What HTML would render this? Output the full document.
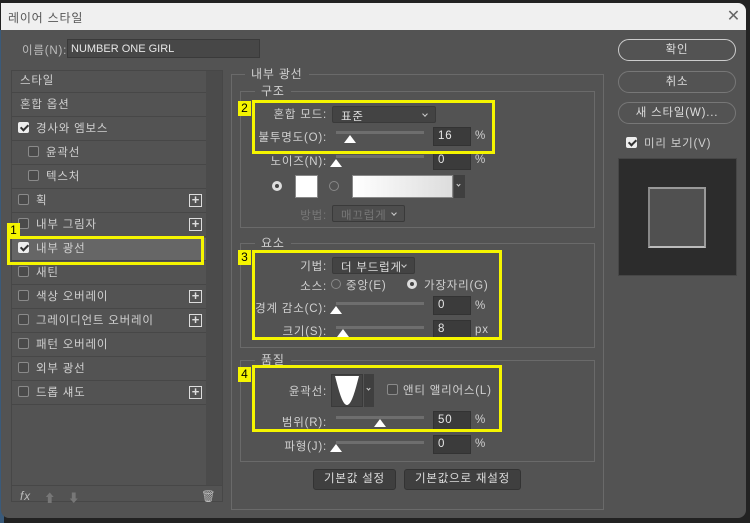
<!DOCTYPE html>
<html><head><meta charset="utf-8"><style>
*{margin:0;padding:0;box-sizing:border-box}
body{width:750px;height:523px;overflow:hidden;background:#222;font-family:"Liberation Sans","Noto Sans CJK KR",sans-serif;font-size:11.5px;color:#d0d0d0;position:relative;letter-spacing:0.8px}
.a{position:absolute}
.dlg{left:1px;top:3px;width:745px;height:515px;background:#535353;border-radius:0 8px 8px 8px;overflow:hidden}
.title{left:0;top:0;width:745px;height:27px;background:#f0f0f0;color:#555;font-size:12px;padding:6px 0 0 7px}
.item{left:12px;width:194px;height:23px;border-bottom:1px solid #474747;line-height:22px}
.cb{display:inline-block;width:11px;height:11px;border:1px solid #8a8a8a;border-radius:2px;vertical-align:-1px;margin-right:7px;background:#4a4a4a}
.cbc{background:#eee;border-color:#eee;position:relative}
.cbc:after{content:"";position:absolute;left:3px;top:0px;width:3px;height:6px;border:solid #333;border-width:0 2px 2px 0;transform:rotate(45deg)}
.plus{width:13px;height:13px;border:1px solid #ddd;color:#ddd;font-size:13px;line-height:10px;text-align:center;font-weight:bold;letter-spacing:0}
.grp{border:1px solid #6a6a6a}
.lg{background:#535353;padding:0 6px;font-size:12px}
.yb{border:3px solid #f5f500}
.yl{background:#f5f500;color:#000;font-size:12px;line-height:14px;width:13px;height:15px;text-align:center;letter-spacing:0}
.dd{background:#434343;border:1px solid #3a3a3a;border-radius:2px;color:#ddd;padding:1px 0 0 8px;height:17px}
.dd:after{content:"";position:absolute;right:8px;top:5px;width:3px;height:3px;border:solid #ccc;border-width:0 1px 1px 0;transform:rotate(45deg)}
.inp{background:#3b3b3b;border:1px solid #333;height:19px;width:38px;padding:2px 0 0 4px;color:#e6e6e6}
.trk{height:3px;background:#6e6e6e;width:88px}
.th{width:0;height:0;border-left:6px solid transparent;border-right:6px solid transparent;border-bottom:8px solid #fff}
.btn{border:1px solid #8a8a8a;border-radius:12px;text-align:center;line-height:20px;color:#ddd;width:118px;height:22px}
.rb{border:1px solid #333;background:#3f3f3f;border-radius:3px;height:21px;line-height:19px;text-align:center;color:#ddd}
.r{text-align:right}
</style></head><body>
<div class="a" style="left:0;top:30px;width:4px;height:493px;background:#3a5a7a"></div>
<div class="a dlg">
<div class="a title">레이어 스타일</div>
<div class="a" style="right:5px;top:3px;color:#666;font-size:16px">✕</div>
</div>
<div class="a" style="left:22px;top:42px;color:#bbb">이름(N):</div>
<div class="a" style="left:67px;top:39px;width:193px;height:19px;background:#474747;border:1px solid #3a3a3a;color:#e6e6e6;padding:3px 0 0 3px;font-size:11px;letter-spacing:0">NUMBER ONE GIRL</div>

<div class="a" style="left:11px;top:70px;width:212px;height:432px;border:1px solid #474747"></div>
<div class="a" style="left:206px;top:71px;width:16px;height:414px;background:#4b4b4b"></div>
<div class="a" style="left:12px;top:485px;width:210px;height:1px;background:#474747"></div>
<div class="a item" style="top:70px;padding-left:8px">스타일</div>
<div class="a item" style="top:94px;padding-left:8px">혼합 옵션</div>
<div class="a item" style="top:118px;padding-left:6px"><span class="cb cbc"></span>경사와 엠보스</div>
<div class="a item" style="top:142px;padding-left:16px"><span class="cb"></span>윤곽선</div>
<div class="a item" style="top:166px;padding-left:16px"><span class="cb"></span>텍스처</div>
<div class="a item" style="top:190px;padding-left:6px"><span class="cb"></span>획</div>
<div class="a item" style="top:214px;padding-left:6px"><span class="cb"></span>내부 그림자</div>
<div class="a item" style="top:238px;padding-left:6px;background:#666"><span class="cb cbc"></span>내부 광선</div>
<div class="a item" style="top:262px;padding-left:6px"><span class="cb"></span>새틴</div>
<div class="a item" style="top:286px;padding-left:6px"><span class="cb"></span>색상 오버레이</div>
<div class="a item" style="top:310px;padding-left:6px"><span class="cb"></span>그레이디언트 오버레이</div>
<div class="a item" style="top:334px;padding-left:6px"><span class="cb"></span>패턴 오버레이</div>
<div class="a item" style="top:358px;padding-left:6px"><span class="cb"></span>외부 광선</div>
<div class="a item" style="top:382px;padding-left:6px"><span class="cb"></span>드롭 섀도</div>
<div class="a plus" style="left:189px;top:194px">+</div>
<div class="a plus" style="left:189px;top:218px">+</div>
<div class="a plus" style="left:189px;top:290px">+</div>
<div class="a plus" style="left:189px;top:314px">+</div>
<div class="a plus" style="left:189px;top:386px">+</div>
<div class="a yb" style="left:7px;top:236px;width:197px;height:29px"></div>
<div class="a yl" style="left:7px;top:223px">1</div>
<div class="a" style="left:20px;top:489px;font-style:italic;color:#bbb;font-size:12px">fx</div>
<div class="a" style="left:44px;top:490px;color:#777">⬆</div>
<div class="a" style="left:68px;top:490px;color:#777">⬇</div>
<div class="a" style="left:201px;top:489px;color:#bbb">🗑</div>

<div class="a grp" style="left:231px;top:74px;width:373px;height:436px"></div>
<div class="a lg" style="left:245px;top:65px">내부 광선</div>
<div class="a grp" style="left:240px;top:91px;width:355px;height:137px"></div>
<div class="a lg" style="left:255px;top:82px">구조</div>
<div class="a grp" style="left:240px;top:243px;width:355px;height:105px"></div>
<div class="a lg" style="left:255px;top:234px">요소</div>
<div class="a grp" style="left:240px;top:360px;width:355px;height:102px"></div>
<div class="a lg" style="left:255px;top:351px">품질</div>

<div class="a r" style="left:240px;top:106px;width:87px">혼합 모드:</div>
<div class="a dd" style="left:332px;top:106px;width:104px">표준</div>
<div class="a r" style="left:240px;top:129px;width:87px">불투명도(O):</div>
<div class="a trk" style="left:336px;top:131px"></div><div class="a th" style="left:344px;top:135px"></div>
<div class="a inp" style="left:433px;top:127px">16</div><div class="a" style="left:475px;top:130px">%</div>
<div class="a r" style="left:240px;top:153px;width:87px">노이즈(N):</div>
<div class="a trk" style="left:336px;top:155px"></div><div class="a th" style="left:330px;top:159px"></div>
<div class="a inp" style="left:433px;top:151px">0</div><div class="a" style="left:475px;top:154px">%</div>
<div class="a" style="left:272px;top:181px;width:10px;height:10px;border-radius:50%;border:3px solid #ddd;background:#444"></div>
<div class="a" style="left:295px;top:175px;width:23px;height:23px;background:#fff;border:1px solid #888"></div>
<div class="a" style="left:329px;top:181px;width:10px;height:10px;border-radius:50%;border:1px solid #888"></div>
<div class="a" style="left:352px;top:175px;width:101px;height:23px;background:linear-gradient(90deg,#fff,#ddd);border:1px solid #888"></div>
<div class="a" style="left:454px;top:175px;width:11px;height:23px;background:#3f3f3f"><div class="a" style="left:3px;top:8px;width:3px;height:3px;border:solid #ccc;border-width:0 1px 1px 0;transform:rotate(45deg)"></div></div>
<div class="a r" style="left:240px;top:207px;width:87px;color:#777">방법:</div>
<div class="a dd" style="left:332px;top:205px;width:73px;color:#777;background:#4d4d4d">매끄럽게</div>
<div class="a yb" style="left:252px;top:100px;width:243px;height:54px"></div>
<div class="a yl" style="left:238px;top:101px">2</div>

<div class="a r" style="left:240px;top:258px;width:87px">기법:</div>
<div class="a dd" style="left:332px;top:257px;width:83px">더 부드럽게</div>
<div class="a r" style="left:240px;top:278px;width:87px">소스:</div>
<div class="a" style="left:331px;top:279px;width:10px;height:10px;border-radius:50%;border:1px solid #888"></div>
<div class="a" style="left:346px;top:277px">중앙(E)</div>
<div class="a" style="left:407px;top:279px;width:10px;height:10px;border-radius:50%;border:3px solid #ddd;background:#444"></div>
<div class="a" style="left:424px;top:277px">가장자리(G)</div>
<div class="a r" style="left:240px;top:300px;width:87px">경계 감소(C):</div>
<div class="a trk" style="left:336px;top:302px"></div><div class="a th" style="left:330px;top:306px"></div>
<div class="a inp" style="left:433px;top:296px">0</div><div class="a" style="left:475px;top:300px">%</div>
<div class="a r" style="left:240px;top:323px;width:87px">크기(S):</div>
<div class="a trk" style="left:336px;top:326px"></div><div class="a th" style="left:337px;top:329px"></div>
<div class="a inp" style="left:433px;top:320px">8</div><div class="a" style="left:475px;top:324px">px</div>
<div class="a yb" style="left:252px;top:250px;width:250px;height:90px"></div>
<div class="a yl" style="left:238px;top:250px">3</div>

<div class="a r" style="left:240px;top:383px;width:87px">윤곽선:</div>
<div class="a" style="left:331px;top:374px;width:32px;height:33px;background:#444;border:1px solid #3a3a3a">
<svg width="30" height="31"><path d="M3 1 H27 C24 12 20 30 15 30 C10 30 6 12 3 1Z" fill="#fff"/></svg></div>
<div class="a" style="left:364px;top:374px;width:10px;height:33px;background:#3f3f3f"><div class="a" style="left:3px;top:13px;width:3px;height:3px;border:solid #ccc;border-width:0 1px 1px 0;transform:rotate(45deg)"></div></div>
<div class="a cb" style="left:387px;top:384px"></div>
<div class="a" style="left:403px;top:382px">앤티 앨리어스(L)</div>
<div class="a r" style="left:240px;top:414px;width:87px">범위(R):</div>
<div class="a trk" style="left:336px;top:416px"></div><div class="a th" style="left:374px;top:419px"></div>
<div class="a inp" style="left:433px;top:411px">50</div><div class="a" style="left:475px;top:414px">%</div>
<div class="a r" style="left:240px;top:438px;width:87px">파형(J):</div>
<div class="a trk" style="left:336px;top:441px"></div><div class="a th" style="left:330px;top:444px"></div>
<div class="a inp" style="left:433px;top:435px">0</div><div class="a" style="left:475px;top:438px">%</div>
<div class="a yb" style="left:252px;top:365px;width:250px;height:67px"></div>
<div class="a yl" style="left:238px;top:367px">4</div>

<div class="a rb" style="left:313px;top:469px;width:83px">기본값 설정</div>
<div class="a rb" style="left:404px;top:469px;width:117px">기본값으로 재설정</div>

<div class="a btn" style="left:618px;top:39px;border-color:#ccc;border-width:1.5px">확인</div>
<div class="a btn" style="left:618px;top:71px;border-color:#777">취소</div>
<div class="a btn" style="left:618px;top:102px;border-color:#777">새 스타일(W)...</div>
<div class="a" style="left:626px;top:135px"><span class="cb cbc"></span>미리 보기(V)</div>
<div class="a" style="left:618px;top:158px;width:119px;height:118px;background:#2c2c2c;border:1px solid #464646"></div>
<div class="a" style="left:648px;top:187px;width:58px;height:61px;background:#505050;border:2px solid #999;border-left-color:#888;border-bottom-color:#bbb"></div>
</body></html>
